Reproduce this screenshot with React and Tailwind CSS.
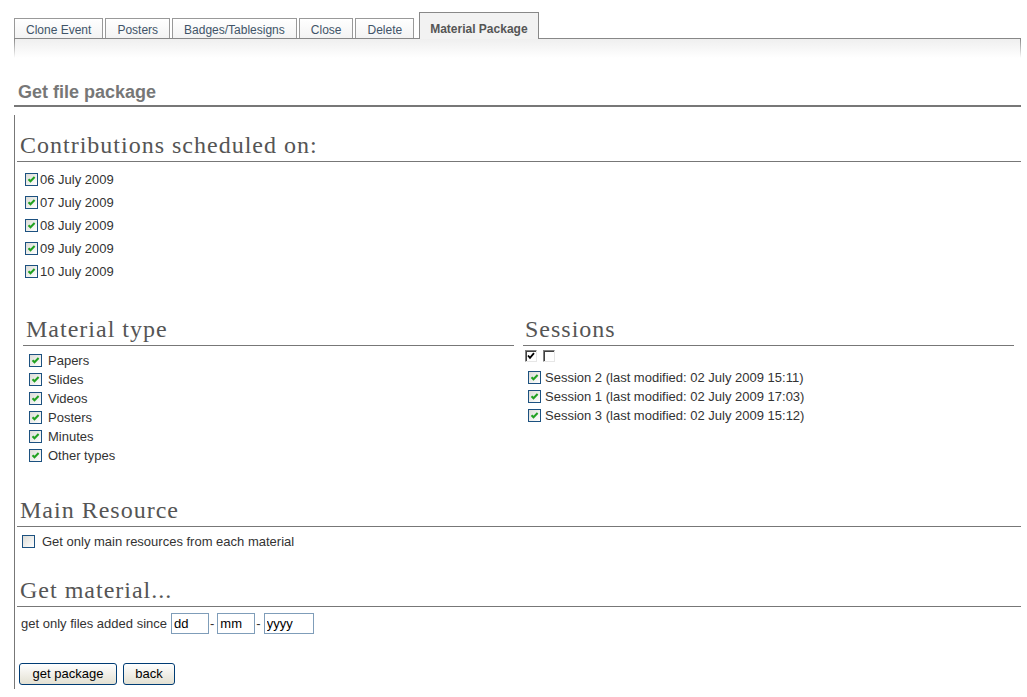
import React from "react";

const tabs = ["Clone Event", "Posters", "Badges/Tablesigns", "Close", "Delete"];
const dates = ["06 July 2009", "07 July 2009", "08 July 2009", "09 July 2009", "10 July 2009"];
const types = ["Papers", "Slides", "Videos", "Posters", "Minutes", "Other types"];
const sessions = [
  "Session 2 (last modified: 02 July 2009 15:11)",
  "Session 1 (last modified: 02 July 2009 17:03)",
  "Session 3 (last modified: 02 July 2009 15:12)",
];

function XpCheck({ checked = true }) {
  return (
    <span className="flex h-[13px] w-[13px] shrink-0 items-center justify-center border border-[#1c5180] bg-gradient-to-br from-[#dcdcd7] to-white">
      {checked && (
        <svg width="9" height="9" viewBox="0 0 9 9">
          <path d="M1.5 4.2 L3.5 6.3 L7.6 2" fill="none" stroke="#21a121" strokeWidth="2" />
        </svg>
      )}
    </span>
  );
}

function ClassicCheck({ checked }) {
  return (
    <span className="flex h-[12px] w-[12px] shrink-0 items-center justify-center border border-t-[#808080] border-l-[#808080] border-r-[#e6e6e6] border-b-[#e6e6e6] bg-white shadow-[inset_1px_1px_0_#404040]">
      {checked && (
        <svg width="8" height="8" viewBox="0 0 8 8">
          <path d="M1 3.5 L3 5.8 L7 1.2" fill="none" stroke="#000" strokeWidth="1.8" />
        </svg>
      )}
    </span>
  );
}

function Heading({ children, pl = "pl-[3px]" }) {
  return (
    <div
      className={`${pl} border-b border-[#777] pb-[2px] text-[24px] leading-[28px] tracking-[1px] text-[#555]`}
      style={{ fontFamily: '"Liberation Serif", "Times New Roman", serif' }}
    >
      {children}
    </div>
  );
}

export default function App() {
  return (
    <div
      className="h-[697px] w-full overflow-hidden bg-white pr-[6px] pl-[14px] text-[13px] text-[#333]"
      style={{ fontFamily: '"Liberation Sans", Arial, sans-serif' }}
    >
      {/* tabs */}
      <div className="flex items-end pt-[12px]">
        {tabs.map((t) => (
          <div
            key={t}
            className="mr-[2px] flex h-[20px] items-center border border-b-0 border-[#999] bg-gradient-to-b from-white to-[#f3f3f3] px-[11px] pt-[2px] text-[12px] text-[#3f5468]"
          >
            {t}
          </div>
        ))}
        <div className="relative z-10 ml-[3px] -mb-px flex h-[27px] items-center border border-b-0 border-[#888] bg-[#f2f2f2] px-[10px] pt-[5px] text-[12px] font-bold text-[#555]">
          Material Package
        </div>
      </div>
      <div className="flex h-[20px] justify-between border-t border-[#888] bg-gradient-to-b from-[#efefef] to-white">
        <div className="w-px bg-gradient-to-b from-[#888] to-white" />
        <div className="w-px bg-gradient-to-b from-[#888] to-white" />
      </div>

      {/* title */}
      <div className="mt-[24px] border-b-2 border-[#777] pb-[3px] pl-[4px] text-[18px] leading-[20px] font-bold text-[#777]">
        Get file package
      </div>

      {/* section */}
      <div className="mt-[8px] border-l border-[#777] pb-[4px]">
        <div className="ml-[2px] pt-[16px]">
          <Heading>Contributions scheduled on:</Heading>
        </div>
        <div className="mt-[6px] pl-[10px]">
          {dates.map((d) => (
            <div key={d} className="flex h-[23px] items-center gap-[2px]">
              <XpCheck />
              <span>{d}</span>
            </div>
          ))}
        </div>

        <div className="mt-[32px] grid grid-cols-2 gap-x-[9px] pr-[7px] pl-[8px]">
          <div>
            <Heading>Material type</Heading>
            <div className="mt-[5px] pl-[6px]">
              {types.map((t) => (
                <div key={t} className="flex h-[19px] items-center gap-[6px]">
                  <XpCheck />
                  <span>{t}</span>
                </div>
              ))}
            </div>
          </div>
          <div>
            <Heading pl="pl-[2px]">Sessions</Heading>
            <div className="mt-[4px] flex gap-[6px] pl-[2px]">
              <ClassicCheck checked />
              <ClassicCheck />
            </div>
            <div className="mt-[6px] pl-[5px]">
              {sessions.map((s) => (
                <div key={s} className="flex h-[19px] items-center gap-[4px]">
                  <XpCheck />
                  <span>{s}</span>
                </div>
              ))}
            </div>
          </div>
        </div>

        <div className="mt-[31px] ml-[2px]">
          <Heading>Main Resource</Heading>
        </div>
        <div className="mt-[5px] flex h-[19px] items-center gap-[7px] pl-[7px]">
          <XpCheck checked={false} />
          <span>Get only main resources from each material</span>
        </div>

        <div className="mt-[25px] ml-[2px]">
          <Heading>Get material...</Heading>
        </div>
        <div className="mt-[6px] flex h-[21px] items-center pl-[6px]">
          <span className="mr-[4px]">get only files added since</span>
          <input
            className="h-[21px] w-[38px] border border-[#7f9db9] px-[2px] text-[13px] text-black outline-none"
            defaultValue="dd"
          />
          <span className="px-[1px]">-</span>
          <input
            className="ml-[2px] h-[21px] w-[38px] border border-[#7f9db9] px-[2px] text-[13px] text-black outline-none"
            defaultValue="mm"
          />
          <span className="px-[1px]">-</span>
          <input
            className="ml-[2px] h-[21px] w-[50px] border border-[#7f9db9] px-[2px] text-[13px] text-black outline-none"
            defaultValue="yyyy"
          />
        </div>

        <div className="mt-[29px] flex gap-[6px] pl-[4px]">
          <button className="h-[22px] w-[98px] rounded-[3px] border border-[#003c74] bg-gradient-to-b from-white to-[#e3e0d2] text-[13px] text-black">
            get package
          </button>
          <button className="h-[22px] w-[52px] rounded-[3px] border border-[#003c74] bg-gradient-to-b from-white to-[#e3e0d2] text-[13px] text-black">
            back
          </button>
        </div>
      </div>
    </div>
  );
}
